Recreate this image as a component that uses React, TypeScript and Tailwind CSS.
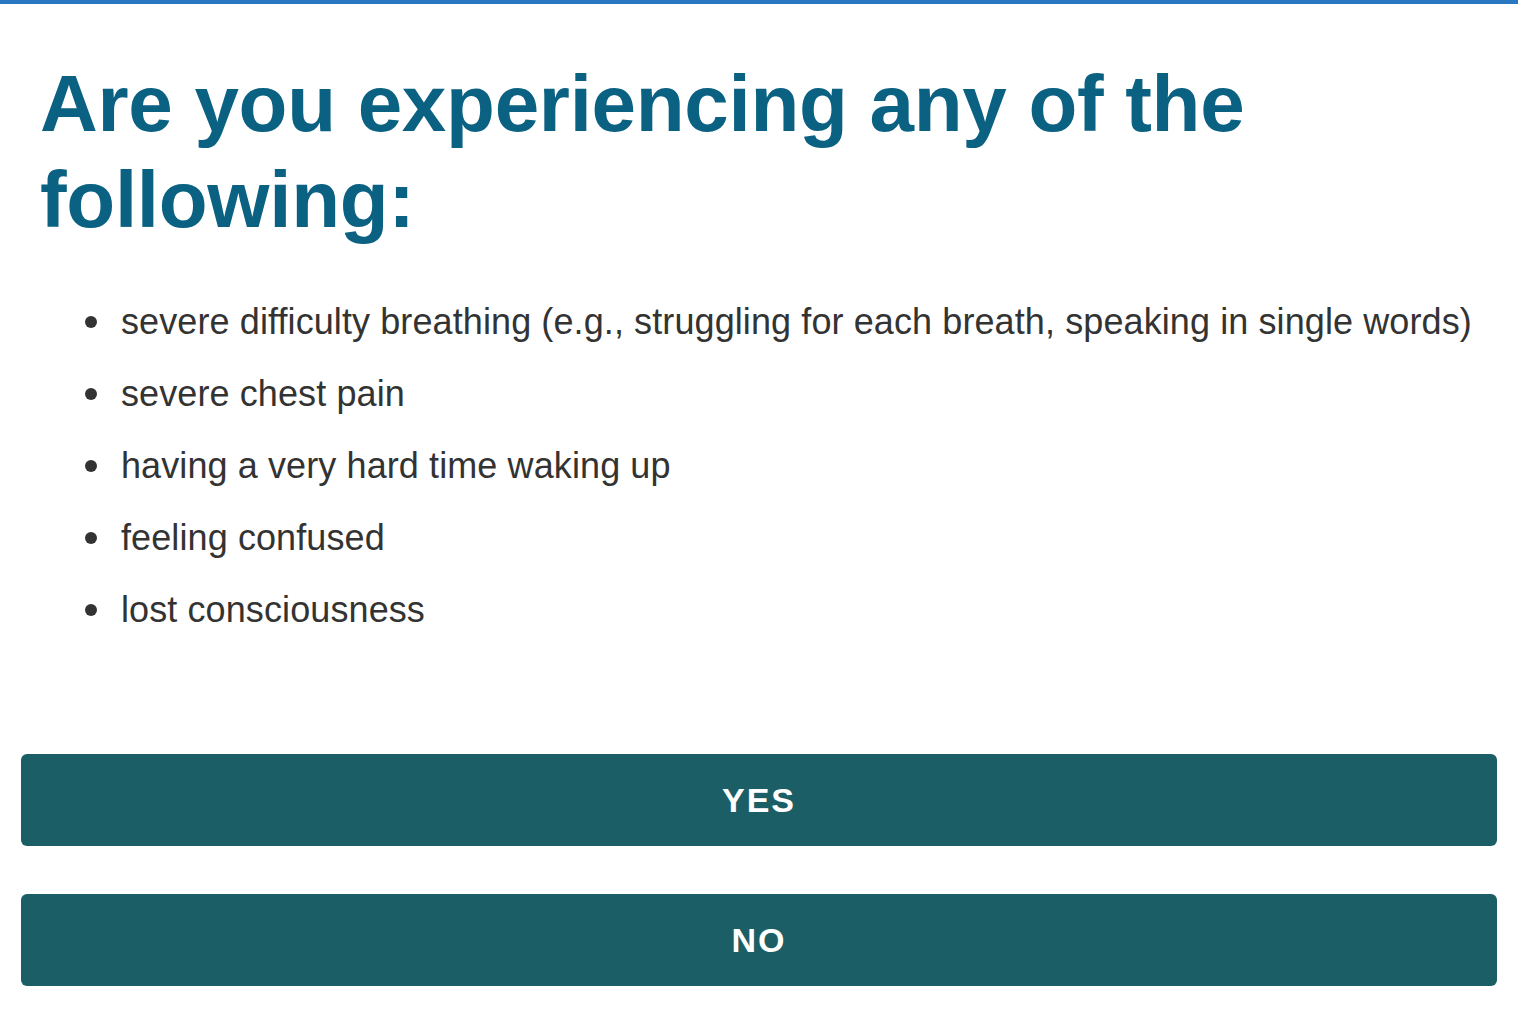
const symptoms = [
  "severe difficulty breathing (e.g., struggling for each breath, speaking in single words)",
  "severe chest pain",
  "having a very hard time waking up",
  "feeling confused",
  "lost consciousness",
];

export default function App() {
  return (
    <div className="min-h-screen bg-white border-t-4 border-[#2a78c2] font-['Liberation_Sans',Arial,sans-serif]">
      <div className="px-[21px] pt-[52px]">
        <h1 className="px-[19px] text-[80px] leading-[96px] font-bold text-[#0a6182] tracking-[-0.3px]">
          Are you experiencing any of the following:
        </h1>

        <ul className="mt-[38px] pl-[64px] text-[36px] leading-[72px] text-[#333333] tracking-[0.1px]">
          {symptoms.map((s) => (
            <li key={s} className="flex items-center">
              <span className="w-[12px] h-[12px] rounded-full bg-[#333333] shrink-0 mr-[24px]" />
              {s}
            </li>
          ))}
        </ul>

        <div className="mt-[108px] flex flex-col gap-[48px]">
          {["YES", "NO"].map((label) => (
            <button
              key={label}
              className="h-[92px] w-full rounded-[6px] bg-[#1b5e66] text-white text-[34px] font-bold tracking-[2px]"
            >
              {label}
            </button>
          ))}
        </div>
      </div>
    </div>
  );
}
